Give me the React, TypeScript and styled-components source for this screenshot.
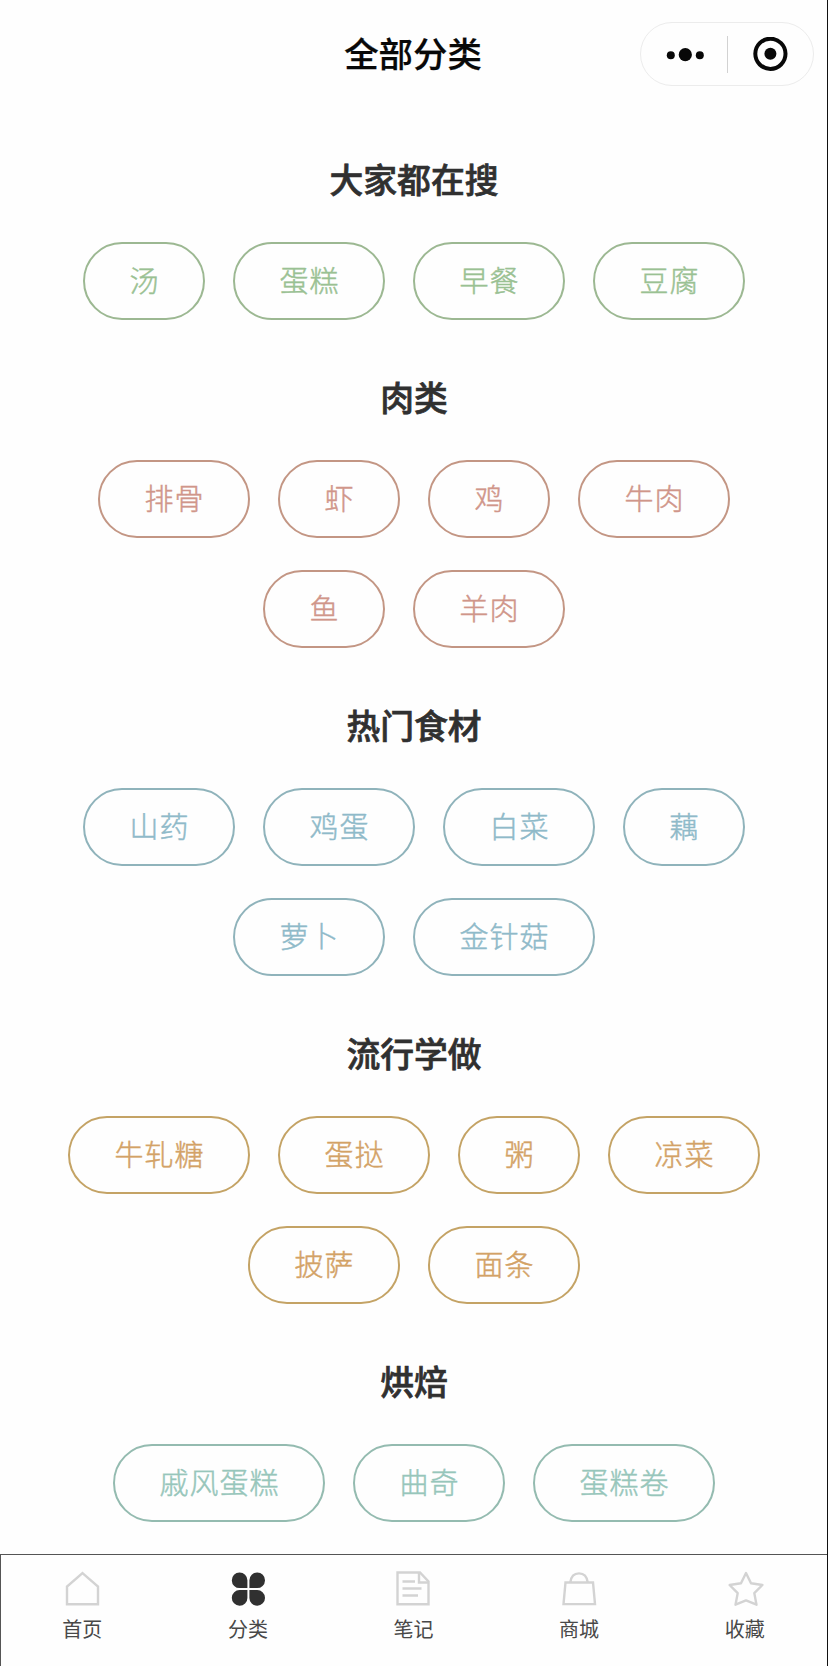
import React from 'react';
import styled, { createGlobalStyle } from 'styled-components';

const GlobalStyle = createGlobalStyle`
  *, *::before, *::after { box-sizing: border-box; }
  body {
    margin: 0;
    background: #fefefe;
    font-family: "Noto Sans CJK SC", "Liberation Sans", sans-serif;
  }
`;

const Page = styled.div`
  display: flex;
  flex-direction: column;
  width: 828px;
  height: 1666px;
  overflow: hidden;
  border-right: 1px solid #111;
`;

const Header = styled.header`
  display: grid;
  grid-template-columns: 1fr auto 1fr;
  align-items: center;
  height: 108px;
  padding: 0 13px 0 12px;
`;

const Title = styled.h1`
  grid-column: 2;
  margin: 0;
  padding-bottom: 4px;
  font-size: 34.4px;
  line-height: 50px;
  font-weight: 500;
  -webkit-text-stroke: 0.25px currentColor;
  color: #080808;
`;

const Capsule = styled.div`
  justify-self: end;
  display: flex;
  align-items: center;
  width: 174px;
  height: 64px;
  border: 1px solid #ececec;
  border-radius: 32px;
`;

const CapsuleButton = styled.button`
  flex: 1;
  display: flex;
  align-items: center;
  justify-content: center;
  padding: 1px 0 0 2px;
  border: 0;
  background: none;
  color: #080808;
`;

const CapsuleDivider = styled.span`
  width: 1px;
  height: 37px;
  background: #d2d2d2;
`;

const Content = styled.main`
  flex: 1;
  min-height: 0;
  padding: 45px 0 0 1px;
`;

const Section = styled.section`
  display: flex;
  flex-direction: column;
  align-items: center;
  margin-bottom: 51px;
`;

const SectionTitle = styled.h2`
  margin: 0 0 37px;
  font-size: 33.8px;
  line-height: 52px;
  font-weight: 500;
  -webkit-text-stroke: 0.7px currentColor;
  color: #303030;
`;

const TagRows = styled.div`
  display: flex;
  flex-direction: column;
  gap: 32px;
`;

const TagRow = styled.div`
  display: flex;
  justify-content: center;
  gap: 28px;
`;

const Tag = styled.button<{ $text: string; $line: string }>`
  height: 78px;
  padding: 0 43.5px 5px 44.5px;
  border: 2px solid ${(p) => p.$line};
  border-radius: 39px;
  background: transparent;
  color: ${(p) => p.$text};
  font-family: inherit;
  font-size: 29px;
  font-weight: 300;
  letter-spacing: 1px;
  -webkit-text-stroke: 0.45px currentColor;
  line-height: 44px;
  white-space: nowrap;
`;

const TabBar = styled.nav`
  display: flex;
  height: 112px;
  margin-right: -1px;
  box-shadow: inset 1px 1px 0 #555;
`;

const TabItem = styled.button`
  flex: 1;
  display: flex;
  flex-direction: column;
  align-items: center;
  gap: 8px;
  padding: 16px 1px 0 0;
  border: 0;
  background: none;
`;

const TabLabel = styled.span`
  font-family: "Noto Sans CJK SC", sans-serif;
  font-size: 20px;
  line-height: 26px;
  color: #484848;
`;

const outline = { fill: 'none', stroke: '#d3d3d3', strokeWidth: 2.4 };

const HomeIcon = () => (
  <svg width="38" height="38" viewBox="0 0 38 38" {...outline}>
    <path d="M19.5 3.2 35 16.5V34.3H4V16.5Z" />
  </svg>
);

const CloverIcon = () => (
  <svg width="38" height="38" viewBox="0 0 38 38" fill="#303030">
    <path d="M18.4 18.1H10.8A7.8 7.8 0 1 1 18.4 10.3Z" />
    <path d="M20.4 18.1H28A7.8 7.8 0 1 0 20.4 10.3Z" />
    <path d="M18.4 20.1H10.8A7.8 7.8 0 1 0 18.4 27.9Z" />
    <path d="M20.4 20.1H28A7.8 7.8 0 1 1 20.4 27.9Z" />
  </svg>
);

const NoteIcon = () => (
  <svg width="38" height="38" viewBox="0 0 38 38" {...outline}>
    <path d="M3.5 2.5H26L34.5 11.5V34.3H3.5Z" />
    <path d="M25 2.5V12.5H34.5" />
    <path d="M8.5 11.5H21M8.5 18.5H27.5M8.5 25.5H24" />
  </svg>
);

const BagIcon = () => (
  <svg width="38" height="38" viewBox="0 0 38 38" {...outline}>
    <path d="M5.5 12.5H33L35 34.1H3.5Z" />
    <path d="M10.3 12.5C11 6.5 14.5 3.4 19 3.4S27 6.5 27.7 12.5" />
  </svg>
);

const StarIcon = () => (
  <svg width="38" height="38" viewBox="0 0 38 38" {...outline} strokeLinejoin="round">
    <path d="M20 3 25 13.3 36.4 15 28.3 23.1 30.5 34.7 20 30.4 9.5 34.7 11.7 23.1 3.6 15 15 13.3Z" />
  </svg>
);

const MoreIcon = () => (
  <svg width="40" height="16" viewBox="0 0 40 16" fill="currentColor">
    <circle cx="5.8" cy="8.2" r="4" />
    <circle cx="20.3" cy="7.7" r="6.6" />
    <circle cx="34.8" cy="8.2" r="4" />
  </svg>
);

const TargetIcon = () => (
  <svg width="36" height="36" viewBox="0 0 36 36">
    <circle cx="17.4" cy="16.8" r="15.1" fill="none" stroke="currentColor" strokeWidth="4" />
    <circle cx="17.4" cy="16.8" r="6" fill="currentColor" />
  </svg>
);

const sections = [
  { title: '大家都在搜', text: '#9ac193', line: '#9cb892', rows: [['汤', '蛋糕', '早餐', '豆腐']] },
  { title: '肉类', text: '#d0968a', line: '#c39684', rows: [['排骨', '虾', '鸡', '牛肉'], ['鱼', '羊肉']] },
  { title: '热门食材', text: '#8fbac9', line: '#8fb3bb', rows: [['山药', '鸡蛋', '白菜', '藕'], ['萝卜', '金针菇']] },
  { title: '流行学做', text: '#d3a266', line: '#c4a365', rows: [['牛轧糖', '蛋挞', '粥', '凉菜'], ['披萨', '面条']] },
  { title: '烘焙', text: '#97c6bb', line: '#94bbb0', rows: [['戚风蛋糕', '曲奇', '蛋糕卷']] },
];

const tabs = [
  { label: '首页', Icon: HomeIcon },
  { label: '分类', Icon: CloverIcon },
  { label: '笔记', Icon: NoteIcon },
  { label: '商城', Icon: BagIcon },
  { label: '收藏', Icon: StarIcon },
];

export default function App() {
  return (
    <Page>
      <GlobalStyle />
      <Header>
        <Title>全部分类</Title>
        <Capsule>
          <CapsuleButton aria-label="更多"><MoreIcon /></CapsuleButton>
          <CapsuleDivider />
          <CapsuleButton aria-label="关闭"><TargetIcon /></CapsuleButton>
        </Capsule>
      </Header>
      <Content>
        {sections.map((s) => (
          <Section key={s.title}>
            <SectionTitle>{s.title}</SectionTitle>
            <TagRows>
              {s.rows.map((row) => (
                <TagRow key={row[0]}>
                  {row.map((t) => (
                    <Tag key={t} $text={s.text} $line={s.line}>{t}</Tag>
                  ))}
                </TagRow>
              ))}
            </TagRows>
          </Section>
        ))}
      </Content>
      <TabBar>
        {tabs.map(({ label, Icon }) => (
          <TabItem key={label}>
            <Icon />
            <TabLabel>{label}</TabLabel>
          </TabItem>
        ))}
      </TabBar>
    </Page>
  );
}
